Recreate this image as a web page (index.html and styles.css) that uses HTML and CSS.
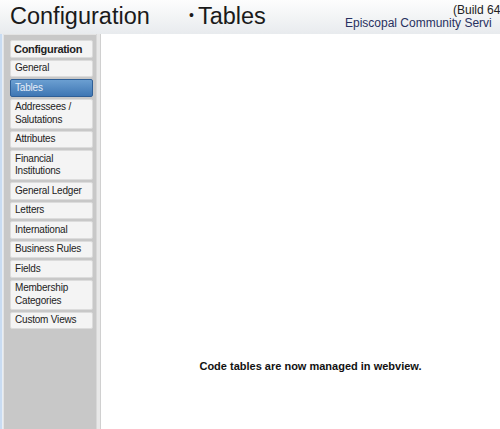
FILE: index.html
```html
<!DOCTYPE html>
<html lang="en">
<head>
  <meta charset="UTF-8" />
  <title>Configuration - Tables</title>
  <link rel="stylesheet" href="styles.css">
</head>
<body>
  <div class="window">
    <header class="header">
      <h1 class="title">Configuration</h1>
      <h2 class="subtitle"><span class="bullet">&bull;</span>Tables</h2>
      <div class="info">
        <div class="build">(Build 64</div>
        <div class="org">Episcopal Community Servi</div>
      </div>
    </header>
    <div class="main">
      <div class="edge"></div>
      <nav class="sidebar">
        <div class="nav-item nav-head">Configuration</div>
        <div class="nav-item">General</div>
        <div class="nav-item active">Tables</div>
        <div class="nav-item">Addressees /<br>Salutations</div>
        <div class="nav-item">Attributes</div>
        <div class="nav-item">Financial<br>Institutions</div>
        <div class="nav-item">General Ledger</div>
        <div class="nav-item">Letters</div>
        <div class="nav-item">International</div>
        <div class="nav-item">Business Rules</div>
        <div class="nav-item">Fields</div>
        <div class="nav-item">Membership<br>Categories</div>
        <div class="nav-item">Custom Views</div>
      </nav>
      <div class="splitter"></div>
      <section class="content">
        <p class="message">Code tables are now managed in webview.</p>
      </section>
    </div>
  </div>
</body>
</html>
```

FILE: styles.css
```css
* {
  margin: 0;
  padding: 0;
  box-sizing: border-box;
}
html, body {
  width: 100%;
  height: 100%;
  overflow: hidden;
}
body {
  font-family: 'Liberation Sans', Arial, sans-serif;
  background: #fff;
}
.window {
  display: flex;
  flex-direction: column;
  height: 429px;
}
.header {
  height: 34px;
  display: flex;
  align-items: flex-start;
  background: linear-gradient(to bottom, #fdfdfd, #e8ebee);
  white-space: nowrap;
  overflow: hidden;
}
.title {
  font-size: 23.5px;
  font-weight: 400;
  color: #1a1a1a;
  padding: 3px 0 0 10px;
  width: 189px;
  flex: none;
}
.subtitle {
  font-size: 23.5px;
  font-weight: 400;
  color: #1a1a1a;
  padding-top: 3px;
  width: 156px;
  flex: none;
}
.bullet {
  font-size: 14px;
  vertical-align: 4px;
  margin-right: 4px;
}
.info {
  flex: none;
  font-size: 12px;
  line-height: 13px;
  padding-top: 4px;
}
.build {
  color: #222;
  padding-left: 108px;
}
.org {
  color: #283060;
}
.main {
  flex: 1;
  display: flex;
}
.edge {
  width: 3px;
  background: #c9dcf2;
  border-right: 1px solid #e8eef5;
}
.sidebar {
  width: 93px;
  background: #c8c8c8;
  border-left: 1px solid #e4e4e4;
  border-top: 1px solid #e4e4e4;
  display: flex;
  flex-direction: column;
  gap: 2px;
  padding: 5px 3px 0 6px;
}
.nav-item {
  background: #f4f4f4;
  border: 1px solid #dcdcdc;
  border-radius: 2px;
  font-size: 10px;
  line-height: 12.5px;
  color: #222;
  padding: 1.5px 3px 1.5px 4px;
  letter-spacing: -0.2px;
}
.nav-head {
  font-weight: 700;
  font-size: 11px;
  padding: 2px 2px 1px 3px;
  letter-spacing: -0.3px;
}
.active {
  background: linear-gradient(to bottom, #6b9fd1, #3f77b4);
  border-color: #2f5f97;
  color: #e6eef8;
}
.splitter {
  width: 5px;
  background: #e8e8e8;
  border-left: 1px solid #d8d8d8;
  border-right: 1px solid #d0d0d0;
}
.content {
  flex: 1;
  display: flex;
  flex-direction: column;
  align-items: center;
  padding-top: 326px;
}
.message {
  font-weight: 700;
  font-size: 11px;
  color: #111;
  padding-left: 20px;
}
```
